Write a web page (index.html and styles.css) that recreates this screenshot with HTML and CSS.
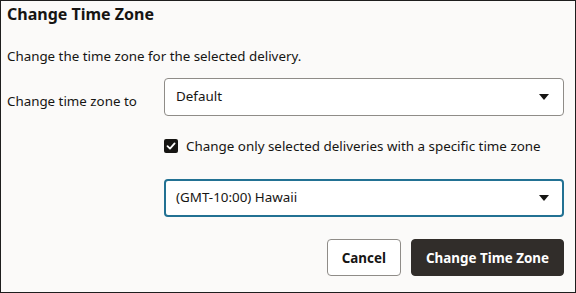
FILE: index.html
```html
<!DOCTYPE html>
<html>
<head>
<meta charset="utf-8">
<link rel="stylesheet" href="styles.css">
</head>
<body>
<div class="dialog">
  <h1 class="title">Change Time Zone</h1>
  <p class="desc">Change the time zone for the selected delivery.</p>
  <div class="row">
    <label class="label">Change time zone to</label>
    <div class="controls">
      <div class="select">
        <span class="value">Default</span>
        <svg class="arrow" width="10" height="6" viewBox="0 0 10 6"><path d="M0 0H10L5 6Z" fill="#161513"/></svg>
      </div>
      <div class="check-row">
        <span class="checkbox">
          <svg width="14" height="14" viewBox="0 0 14 14"><path d="M3.5 7.2L6 9.6L10.6 4.4" fill="none" stroke="#fff" stroke-width="1.8" stroke-linecap="round" stroke-linejoin="round"/></svg>
        </span>
        <span class="check-label">Change only selected deliveries with a specific time zone</span>
      </div>
      <div class="select focused">
        <span class="value">(GMT-10:00) Hawaii</span>
        <svg class="arrow" width="10" height="6" viewBox="0 0 10 6"><path d="M0 0H10L5 6Z" fill="#161513"/></svg>
      </div>
    </div>
  </div>
  <div class="actions">
    <button class="btn">Cancel</button>
    <button class="btn primary">Change Time Zone</button>
  </div>
</div>
</body>
</html>
```
FILE: styles.css
```css
* { box-sizing: border-box; }
html, body { margin: 0; padding: 0; }
body {
  width: 576px;
  height: 293px;
  font-family: "Noto Sans", "Open Sans", sans-serif;
  color: #161513;
  background: #fbfaf9;
}
.dialog {
  width: 576px;
  height: 293px;
  border: 1px solid #1e1e1e;
  padding: 0 11px 0 6px;
  display: flex;
  flex-direction: column;
}
.title {
  margin: 1px 0 0;
  font-size: 16px;
  font-weight: 700;
  line-height: 24px;
}
.desc {
  margin: 20px 0 0;
  font-size: 13.35px;
  line-height: 20px;
}
.row {
  display: flex;
  margin-top: 12px;
}
.label {
  width: 157px;
  flex: none;
  font-size: 13.35px;
  line-height: 20px;
  padding-top: 13px;
}
.controls {
  flex: 1;
  display: flex;
  flex-direction: column;
}
.select {
  height: 38px;
  border: 1px solid #8f8c88;
  border-radius: 4px;
  background: #fff;
  display: flex;
  align-items: center;
  padding: 0 14px 0 11px;
  font-size: 13.4px;
}
.select .value { flex: 1; margin-top: -2px; }
.select.focused {
  border: 2px solid #227193;
  padding-left: 10px;
  padding-right: 13px;
}
.arrow { flex: none; }
.check-row {
  display: flex;
  align-items: center;
  margin: 23px 0 26px;
  height: 14px;
}
.checkbox {
  width: 14px;
  height: 14px;
  background: #161513;
  border-radius: 2px;
  display: flex;
}
.check-label {
  margin-left: 8px;
  font-size: 13.4px;
  line-height: 20px;
}
.actions {
  display: flex;
  justify-content: flex-end;
  gap: 10px;
  margin-top: 22px;
}
.btn {
  font-family: inherit;
  height: 37px;
  border-radius: 4px;
  border: 1px solid #8f8c88;
  background: #fff;
  color: #161513;
  font-size: 13.4px;
  font-weight: 700;
  padding: 0 14px;
  margin: 0;
}
.btn.primary {
  background: #312d2a;
  border-color: #312d2a;
  color: #fff;
}
```
